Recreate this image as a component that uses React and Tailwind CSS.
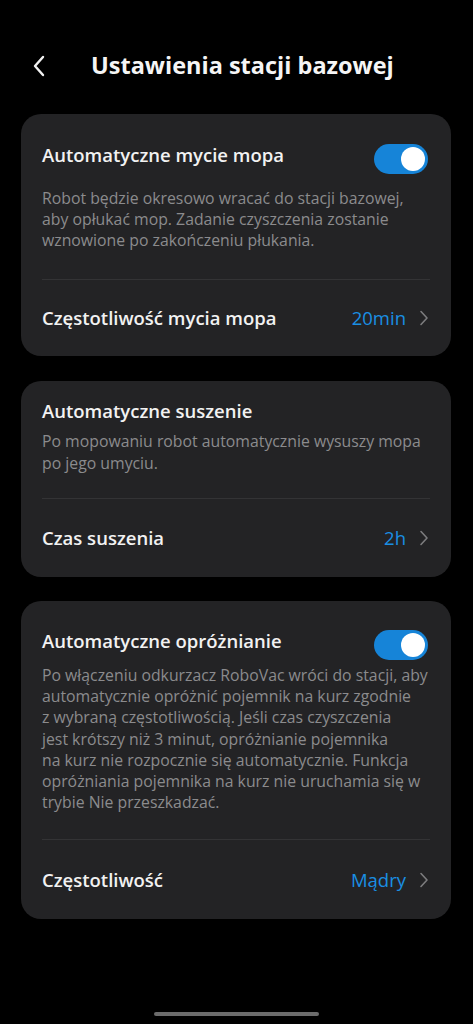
import React from 'react';

const font = { fontFamily: '"Open Sans", "Noto Sans", sans-serif' };

function Toggle() {
  return (
    <div className="-mb-[7px] mr-[2px] mt-[2px] flex h-[30px] w-[54px] shrink-0 items-center justify-end rounded-full bg-[#1684d8] px-[3px]">
      <div className="h-[24px] w-[24px] rounded-full bg-white" />
    </div>
  );
}

function Chevron({ className }) {
  return (
    <svg className={className} width="10" height="16" viewBox="0 0 10 16" fill="none">
      <path d="M2 1.5l6 6.5-6 6.5" stroke="currentColor" strokeWidth="1.6" strokeLinecap="round" strokeLinejoin="round" />
    </svg>
  );
}

function Row({ label, value, height }) {
  return (
    <div className={`flex items-center justify-between ${height}`}>
      <span className="text-[18.5px] font-semibold text-[#f2f2f2]">{label}</span>
      <div className="flex items-center gap-[13px] pr-[1px]">
        <span className="text-[18.5px] text-[#1a8fe3]">{value}</span>
        <Chevron className="text-[#7c7c7e]" />
      </div>
    </div>
  );
}

function Card({ title, toggle, lines, label, value, top, descPad, lh, rowH }) {
  return (
    <div className="rounded-[20px] bg-[#232325] px-[21px]">
      <div className={top}>
        <div className="flex items-start justify-between">
          <span className="text-[18.5px] font-semibold leading-[25px] text-[#f2f2f2]">{title}</span>
          {toggle && <Toggle />}
        </div>
      </div>
      <div className={`${descPad} ${lh} text-[15.8px] text-[#8b8b8d]`}>
        {lines.map((l) => (
          <div key={l} className="whitespace-nowrap">{l}</div>
        ))}
      </div>
      <div className="h-px bg-[#333335]" />
      <Row label={label} value={value} height={rowH} />
    </div>
  );
}

export default function App() {
  return (
    <div className="min-h-[1024px] bg-black" style={font}>
      <div className="flex h-[114px] items-center pt-[17px]">
        <div className="flex w-[91px] justify-start pl-[32px]">
          <svg width="14" height="22" viewBox="0 0 14 22" fill="none">
            <path d="M11 2L3 11l8 9" stroke="#f2f2f2" strokeWidth="2.4" strokeLinecap="round" strokeLinejoin="round" />
          </svg>
        </div>
        <h1 className="text-[23.5px] font-bold text-[#f5f5f5]">Ustawienia stacji bazowej</h1>
      </div>

      <div className="flex flex-col pl-[21px] pr-[22px]">
        <Card
          title="Automatyczne mycie mopa"
          toggle
          top="pt-[28px]"
          descPad="pt-[21px] pb-[28px]"
          lh="leading-[21px]"
          rowH="h-[76px]"
          lines={[
            'Robot będzie okresowo wracać do stacji bazowej,',
            'aby opłukać mop. Zadanie czyszczenia zostanie',
            'wznowione po zakończeniu płukania.',
          ]}
          label="Częstotliwość mycia mopa"
          value="20min"
        />
        <div className="h-[25px]" />
        <Card
          title="Automatyczne suszenie"
          top="pt-[17px]"
          descPad="pt-[7px] pb-[24px]"
          lh="leading-[22px]"
          rowH="h-[78px]"
          lines={[
            'Po mopowaniu robot automatycznie wysuszy mopa',
            'po jego umyciu.',
          ]}
          label="Czas suszenia"
          value="2h"
        />
        <div className="h-[24px]" />
        <Card
          title="Automatyczne opróżnianie"
          toggle
          top="pt-[27px]"
          descPad="pt-[12px] pb-[26px]"
          lh="leading-[21.2px]"
          rowH="h-[79px]"
          lines={[
            'Po włączeniu odkurzacz RoboVac wróci do stacji, aby',
            'automatycznie opróżnić pojemnik na kurz zgodnie',
            'z wybraną częstotliwością. Jeśli czas czyszczenia',
            'jest krótszy niż 3 minut, opróżnianie pojemnika',
            'na kurz nie rozpocznie się automatycznie. Funkcja',
            'opróżniania pojemnika na kurz nie uruchamia się w',
            'trybie Nie przeszkadzać.',
          ]}
          label="Częstotliwość"
          value="Mądry"
        />
      </div>

      <div className="flex justify-center pt-[93px]">
        <div className="h-[4px] w-[165px] rounded-full bg-[#6b6b6b]" />
      </div>
    </div>
  );
}
